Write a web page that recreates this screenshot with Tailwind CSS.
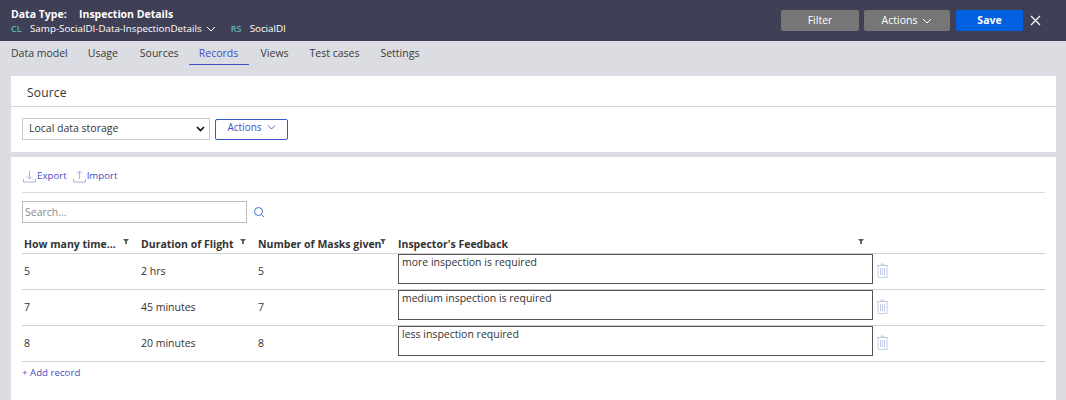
<!DOCTYPE html>
<html lang="en">
<head>
  <meta charset="UTF-8" />
  <title>Inspection Details</title>
  <script src="https://cdn.jsdelivr.net/npm/@tailwindcss/browser@4"></script>
</head>
<body class="bg-[#dcdde3] text-[#333] font-['Open_Sans',sans-serif] text-[10.5px] h-[400px] w-[1066px] overflow-hidden">
  <!-- header -->
  <header class="h-[41px] bg-[#3f4056] flex items-center justify-between pl-[11px] pr-[25px] text-white">
    <div>
      <div class="flex font-bold text-[10.5px] leading-[16px] mt-[1px]">
        <span class="w-[68px]">Data Type:</span>
        <span>Inspection Details</span>
      </div>
      <div class="flex items-center text-[9.8px] leading-[16px] mt-[-1px]">
        <span class="w-[19px] text-[9px] font-semibold text-[#5bb5b5]">CL</span>
        <span>Samp-SocialDI-Data-InspectionDetails</span>
        <svg class="ml-[4px] w-[10px] h-[6px]" viewBox="0 0 10 6" fill="none" stroke="white" stroke-width="1"><path d="M1 1l4 4 4-4"/></svg>
        <span class="ml-[15px] w-[19px] text-[9px] font-semibold text-[#5bb5b5]">RS</span>
        <span>SocialDI</span>
      </div>
    </div>
    <div class="flex items-center">
      <button class="w-[78px] h-[21px] bg-[#767676] rounded-[2px] text-[10.5px]">Filter</button>
      <button class="ml-[5px] w-[86px] h-[21px] bg-[#767676] rounded-[2px] text-[10.5px] flex items-center justify-center gap-[5px]">Actions
        <svg class="w-[10px] h-[6px]" viewBox="0 0 10 6" fill="none" stroke="white" stroke-width="1"><path d="M1 1l4 4 4-4"/></svg>
      </button>
      <button class="ml-[6px] w-[67px] h-[21px] bg-[#0060e0] rounded-[2px] font-bold text-[10.5px]">Save</button>
      <svg class="ml-[7px] w-[11px] h-[11px]" viewBox="0 0 11 11" fill="none" stroke="white" stroke-width="1.2"><path d="M1 1l9 9M10 1l-9 9"/></svg>
    </div>
  </header>

  <!-- tabs -->
  <nav class="h-[35px] flex pl-[11px] text-[#3a3a3a] leading-[24px]">
    <a class="mr-[20px]">Data model</a>
    <a class="mr-[22px]">Usage</a>
    <a class="mr-[10px]">Sources</a>
    <a class="h-[24px] w-[60px] text-center mr-[12px] text-[#3f51c4] border-b border-[#3f51c4]">Records</a>
    <a class="mr-[21px]">Views</a>
    <a class="mr-[21px]">Test cases</a>
    <a>Settings</a>
  </nav>

  <!-- source -->
  <section class="ml-[11px] mr-[10px] h-[76px] bg-white">
    <div class="h-[31px] border-b border-[#d4d4d4] pl-[16px] text-[12px] leading-[33px] tracking-[0.2px]">Source</div>
    <div class="flex items-center pl-[11px] pt-[11px]">
      <div class="w-[188px] h-[22px] border border-[#c9c9c9] flex items-center justify-between pl-[6px] pr-[4px]">
        Local data storage
        <svg class="w-[9px] h-[6px]" viewBox="0 0 9 6" fill="none" stroke="#111" stroke-width="1.7"><path d="M1 1l3.5 3.5L8 1"/></svg>
      </div>
      <button class="ml-[5px] w-[73px] h-[21px] border border-[#3a55c8] rounded-[2px] text-[#3f51c4] text-[10px] flex items-center justify-center gap-[5px] pb-[3px]">Actions
        <svg class="w-[9px] h-[5px]" viewBox="0 0 9 5" fill="none" stroke="#3f51c4" stroke-width="0.9"><path d="M1 .5l3.5 3.5L8 .5"/></svg>
      </button>
    </div>
  </section>

  <!-- records -->
  <section class="mt-[5px] ml-[11px] mr-[10px] h-[243px] bg-white px-[11px]">
    <div class="h-[36px] flex items-center border-b border-[#dcdcdc] text-[9.7px] text-[#3f51c4] pt-[3px]">
      <svg class="w-[13px] h-[13px] ml-[1px] mr-[1px]" viewBox="0 0 13 13" fill="none" stroke="#a9b2e0" stroke-width="1"><path d="M6.5 1v8M4 6.5l2.500 2.500L9 6.500M.5 9v3h12V9"/></svg>
      <span>Export</span>
      <svg class="w-[13px] h-[13px] ml-[6px] mr-[1px]" viewBox="0 0 13 13" fill="none" stroke="#a9b2e0" stroke-width="1"><path d="M6.500 9V1M4 3.500L6.500 1 9 3.500M.5 9v3h12V9"/></svg>
      <span>Import</span>
    </div>
    <div class="flex items-center mt-[8px]">
      <div class="w-[225px] h-[22px] border border-[#bdbdbd] pl-[2px] leading-[20px] text-[#8a8a8a]">Search...</div>
      <svg class="w-[12px] h-[12px] ml-[6px]" viewBox="0 0 12 12" fill="none" stroke="#3f6fd0" stroke-width="1"><circle cx="5.500" cy="5.500" r="4"/><path d="M8.500 8.500L11 11"/></svg>
    </div>

    <!-- table -->
    <div class="mt-[14px]">
      <div class="h-[17px] border-b border-[#cfcfcf] grid grid-cols-[117px_117px_142px_475px_1fr] items-center font-bold text-[#333]">
        <div class="relative pl-[2px]">How many time...<svg class="absolute left-[101px] top-[2px] w-[6px] h-[5px]" viewBox="0 0 7 6" fill="#555"><path d="M0 0h7L4.500 3v3h-2V3z"/></svg></div>
        <div class="relative pl-[2px]">Duration of Flight<svg class="absolute left-[101px] top-[2px] w-[6px] h-[5px]" viewBox="0 0 7 6" fill="#555"><path d="M0 0h7L4.500 3v3h-2V3z"/></svg></div>
        <div class="relative pl-[2px]">Number of Masks given<svg class="absolute left-[124px] top-[2px] w-[6px] h-[5px]" viewBox="0 0 7 6" fill="#555"><path d="M0 0h7L4.500 3v3h-2V3z"/></svg></div>
        <div class="relative">Inspector's Feedback<svg class="absolute left-[460px] top-[2px] w-[6px] h-[5px]" viewBox="0 0 7 6" fill="#555"><path d="M0 0h7L4.500 3v3h-2V3z"/></svg></div>
        <div></div>
      </div>

      <div class="h-[36px] border-b border-[#cfcfcf] grid grid-cols-[117px_117px_142px_475px_1fr] items-center">
        <div class="pl-[2px]">5</div><div class="pl-[2px]">2 hrs</div><div class="pl-[2px]">5</div>
        <div class="h-[30px] border border-[#555] self-start pl-[3px] leading-[15px]">more inspection is required</div>
        <svg class="ml-[4px] mb-[2px] w-[11px] h-[15px]" viewBox="0 0 11 15" fill="none" stroke="#c3cae8" stroke-width="1"><path d="M0 2.500h11M4 2.500V1h3v1.500M1 2.500V14.500h9V2.500M3.500 5v7M5.500 5v7M7.500 5v7"/></svg>
      </div>
      <div class="h-[36px] border-b border-[#cfcfcf] grid grid-cols-[117px_117px_142px_475px_1fr] items-center">
        <div class="pl-[2px]">7</div><div class="pl-[2px]">45 minutes</div><div class="pl-[2px]">7</div>
        <div class="h-[30px] border border-[#555] self-start pl-[3px] leading-[15px]">medium inspection is required</div>
        <svg class="ml-[4px] mb-[2px] w-[11px] h-[15px]" viewBox="0 0 11 15" fill="none" stroke="#c3cae8" stroke-width="1"><path d="M0 2.500h11M4 2.500V1h3v1.500M1 2.500V14.500h9V2.500M3.500 5v7M5.500 5v7M7.500 5v7"/></svg>
      </div>
      <div class="h-[36px] border-b border-[#cfcfcf] grid grid-cols-[117px_117px_142px_475px_1fr] items-center">
        <div class="pl-[2px]">8</div><div class="pl-[2px]">20 minutes</div><div class="pl-[2px]">8</div>
        <div class="h-[30px] border border-[#555] self-start pl-[3px] leading-[15px]">less inspection required</div>
        <svg class="ml-[4px] mb-[2px] w-[11px] h-[15px]" viewBox="0 0 11 15" fill="none" stroke="#c3cae8" stroke-width="1"><path d="M0 2.500h11M4 2.500V1h3v1.500M1 2.500V14.500h9V2.500M3.500 5v7M5.500 5v7M7.500 5v7"/></svg>
      </div>
    </div>
    <div class="mt-[4px] text-[9.7px] text-[#3f51c4] leading-[14px]">+ Add record</div>
  </section>
</body>
</html>
